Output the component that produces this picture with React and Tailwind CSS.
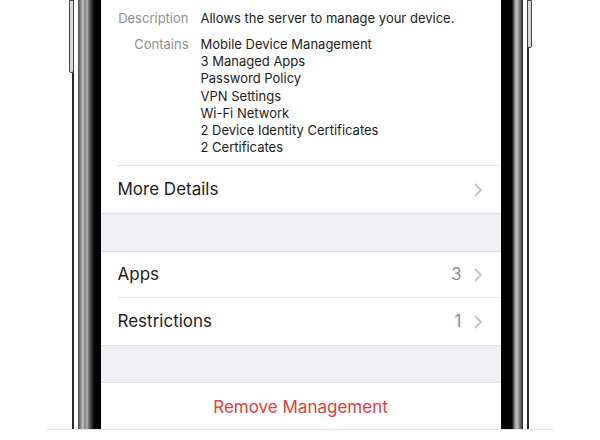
const contents = [
  'Mobile Device Management',
  '3 Managed Apps',
  'Password Policy',
  'VPN Settings',
  'Wi-Fi Network',
  '2 Device Identity Certificates',
  '2 Certificates',
]

function Chevron() {
  return (
    <svg width="9" height="14" viewBox="0 0 9 14" fill="none" className="shrink-0">
      <path d="M1.5 1.5 7 7l-5.5 5.5" stroke="#c4c4c8" strokeWidth="1.8" strokeLinecap="round" strokeLinejoin="round" />
    </svg>
  )
}

function Row({ label, detail, last }) {
  return (
    <div className="flex items-center h-full pl-[17px]">
      <div className={`flex-1 flex items-center h-full pr-[18px] ${last ? '' : 'border-b border-[#e4e4e8]'}`}>
        <span className="flex-1 text-[17px] text-[#1c1c1e]">{label}</span>
        {detail && <span className="text-[17px] text-[#8e8e93] mr-[12px]">{detail}</span>}
        <Chevron />
      </div>
    </div>
  )
}

function Gap({ h }) {
  return <div className={`${h} bg-[#efeff4] border-y border-[#dedee3]`} />
}

export default function App() {
  return (
    <div className="w-[600px] h-[440px] bg-white overflow-hidden font-['Inter','Noto_Sans',sans-serif]">
      <div className="h-[430px] mx-[47px] border-b border-[#e3e3e3] flex justify-center">
        {/* phone: outer steel edge, bezels and screen */}
        <div className="relative h-full border-x-2 border-[#2a2a2a] px-[4px]">
          <div className="absolute left-[-5px] top-0 w-[5px] h-[73px] rounded-b-[2px] border border-[#444] bg-[#d8d8d8]" />
          <div className="absolute right-[-5px] top-0 w-[5px] h-[48px] rounded-b-[2px] border border-[#444] bg-[#d8d8d8]" />
          <div className="flex h-full">
            <div className="w-[23px] bg-[linear-gradient(to_right,#4c4c4c_0px,#8f8f8f_3px,#c9c9c9_5px,#7d7d7d_7px,#b5b5b5_9px,#6a6a6a_11px,#2c2c2c_14px,#050505_16px,#000_23px)]" />
            <div className="w-[400px] bg-white flex flex-col">
              <div className="pt-[10px] pb-[9px] pl-[17px] pr-[16px] text-[13px] leading-[17px]">
                <div className="flex">
                  <span className="w-[71px] text-right text-[#8e8e93]">Description</span>
                  <span className="ml-[12px] text-[#1c1c1e]">Allows the server to manage your device.</span>
                </div>
                <div className="flex mt-[9px]">
                  <span className="w-[71px] text-right text-[#8e8e93]">Contains</span>
                  <div className="ml-[12px] flex flex-col text-[#1c1c1e] leading-[17.2px]">
                    {contents.map((c) => (
                      <span key={c}>{c}</span>
                    ))}
                  </div>
                </div>
              </div>
              <div className="ml-[17px] border-t border-[#e4e4e8]" />
              <div className="h-[47px]">
                <Row label="More Details" last />
              </div>
              <Gap h="h-[39px]" />
              <div className="h-[46px]">
                <Row label="Apps" detail="3" />
              </div>
              <div className="h-[47px]">
                <Row label="Restrictions" detail="1" last />
              </div>
              <Gap h="h-[38px]" />
              <div className="h-[46px] pt-[3px] flex items-center justify-center">
                <span className="text-[17px] text-[#e2403c]">Remove Management</span>
              </div>
            </div>
            <div className="w-[22px] bg-[linear-gradient(to_right,#000_0px,#050505_11px,#3a3a3a_12px,#9a9a9a_14px,#c4c4c4_16px,#8a8a8a_18px,#5a5a5a_20px,#222_22px)]" />
          </div>
        </div>
      </div>
    </div>
  )
}
